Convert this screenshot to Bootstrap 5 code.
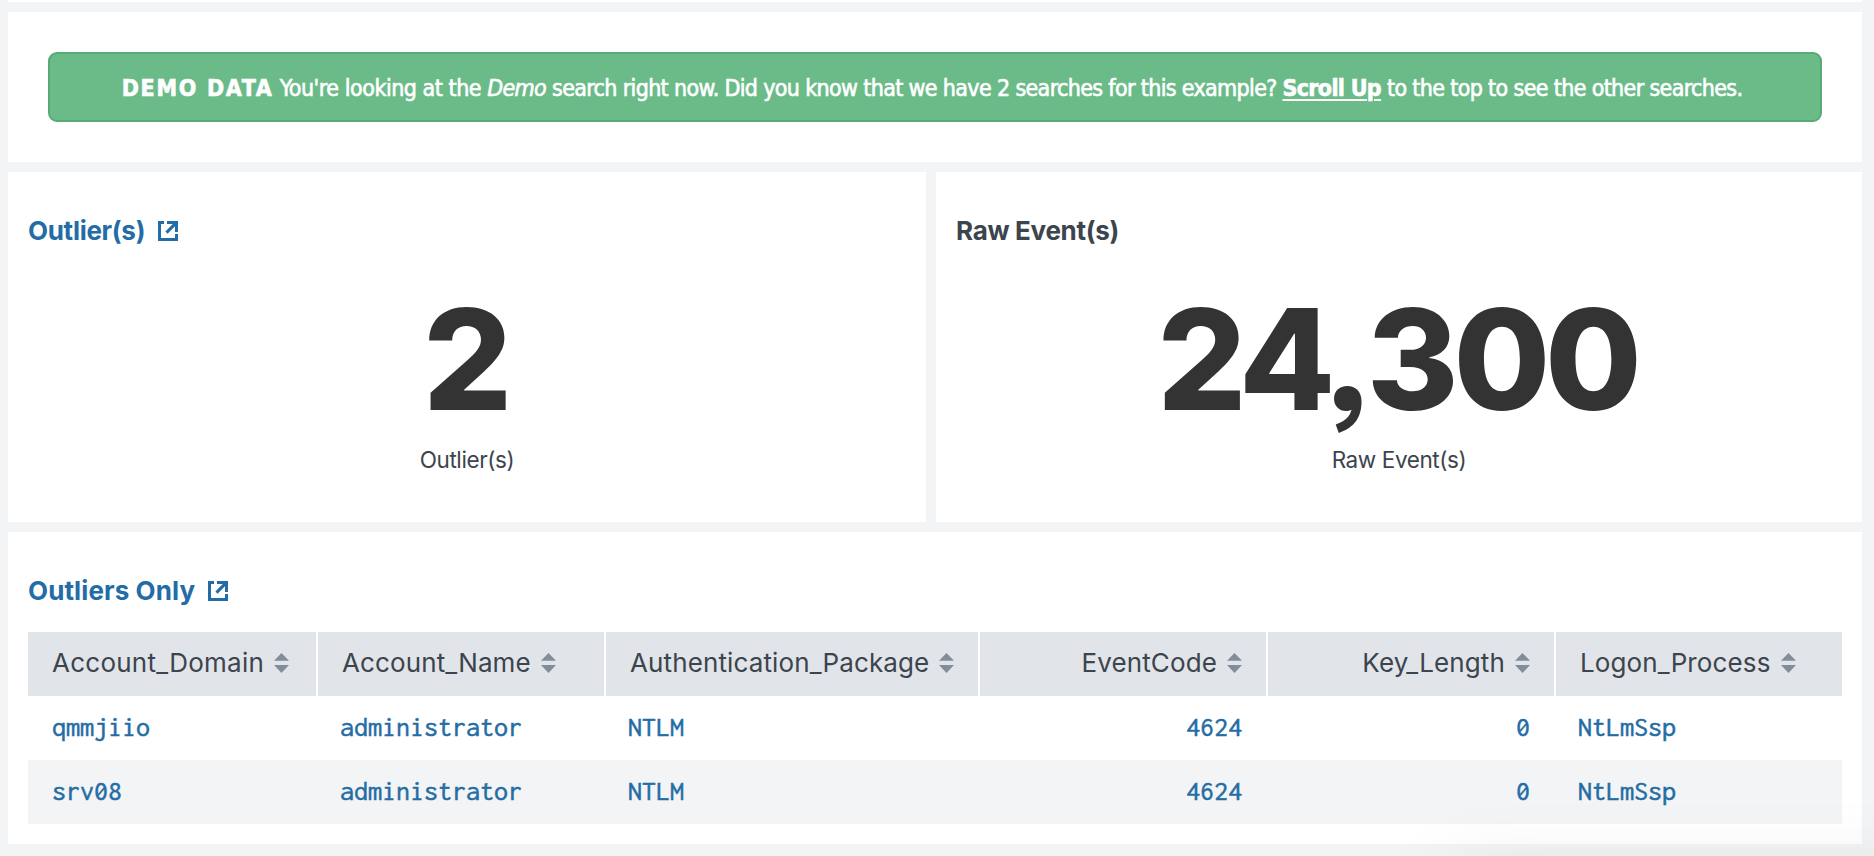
<!DOCTYPE html>
<html lang="en">
<head>
<meta charset="utf-8">
<meta name="viewport" content="width=device-width, initial-scale=1">
<title>Outliers</title>
<link href="https://cdn.jsdelivr.net/npm/bootstrap@5.3.0/dist/css/bootstrap.min.css" rel="stylesheet">
<style>
  body { background: #f2f4f5; font-family: Inter, "Liberation Sans", sans-serif; color: #3c444d; overflow: hidden; }
  .dash { padding: 0 12px 0 8px; gap: 10px; }
  .panel { background: #fff; padding: 46px 20px 0; }
  .panel-prev { height: 2px; }
  .panel-demo { height: 150px; padding: 40px; }
  .demo-alert { height: 70px; padding: 2px 6px 0 0; background: #6bbb89; border: 2px solid #58aa75; border-radius: 9px; color: #fff;
    font-family: "DejaVu Sans Condensed", "DejaVu Sans", sans-serif; font-stretch: condensed; font-size: 23px; line-height: 28px; letter-spacing: -.65px; white-space: pre; -webkit-text-stroke: .6px #fff; }
  .demo-alert strong { letter-spacing: 1.72px; }
  .demo-alert .lead-in { letter-spacing: -.47px; }
  .demo-alert a { color: #fff; font-weight: 700; letter-spacing: -.68px; text-underline-offset: 3px; text-decoration-thickness: 2px; }
  .singles { gap: 10px; height: 350px; }
  .single-a { flex: 0 0 918px; }
  .title { font-size: 26px; line-height: 26px; font-weight: 700; letter-spacing: -.3px; }
  .title a { color: #246ca5; gap: 13px; }
  .title svg { width: 20px; height: 20px; }
  .panel-table .title { letter-spacing: .1px; }
  .big { margin-top: 45px; padding-right: 4px; font-size: 140px; line-height: 140px; font-weight: 800; letter-spacing: -5.2px; color: #333; font-feature-settings: "ss03"; }
  .under { margin-top: 20px; font-size: 22.5px; line-height: 22px; letter-spacing: -.4px; }
  .panel-table { height: 312px; }
  .results { table-layout: fixed; width: 1814px; margin-top: 28px; }
  .results th, .results td { height: 64px; padding: 0 24px 3px; vertical-align: middle; white-space: nowrap; }
  .results th { background: #e1e5e9; font-size: 26px; font-weight: 400; line-height: 30px; letter-spacing: .12px; }
  .results th:first-child { letter-spacing: .25px; }
  .results th + th { border-left: 2px solid #fff; }
  .results th svg { width: 15px; height: 20px; margin-left: 10px; fill: #818d99; vertical-align: -1px; }
  .results td { color: #246ca5; font-family: Inconsolata, "DejaVu Sans Mono", monospace; font-size: 28px; line-height: 30px; -webkit-text-stroke: .5px #246ca5; }
  .results td + td { padding-left: 23px; padding-right: 25px; }
  .results tbody tr:nth-child(2) td { background: #f2f4f5; }
  .c-first { width: 289px; }
  .c-wide { width: 374px; }
  .c-std { width: 288px; }
  .corner-clip { overflow: hidden; pointer-events: none; }
  .corner-shade { position: absolute; left: 1450px; top: 878px; width: 700px; height: 400px; box-shadow: 0 0 80px rgba(0, 0, 0, .1); }
</style>
</head>
<body>
<svg class="d-none">
  <symbol id="open" viewBox="0 0 20 20"><path d="M0 0H6V3H3V17H17V13H20V20H0Z"/><path d="M9 0H20V11H17V5.2L9.6 12.8L7.4 10.6L14.8 3H9Z"/></symbol>
  <symbol id="sort" viewBox="0 0 15 20"><path d="M7.5 0L15 7.8H0ZM0 12H15L7.5 20Z"/></symbol>
</svg>
<main class="dash d-flex flex-column">
  <section class="panel-prev bg-white"></section>
  <section class="panel panel-demo">
    <div class="demo-alert d-flex align-items-center justify-content-center"><div><strong>DEMO DATA</strong><span class="lead-in"> You're looking at the </span><em>Demo</em> search right now. Did you know that we have 2 searches for this example? <a href="#">Scroll Up</a> to the top to see the other searches.</div></div>
  </section>
  <div class="singles d-flex">
    <section class="panel single-a">
      <h2 class="title mb-0"><a href="#" class="d-inline-flex align-items-center text-decoration-none">Outlier(s)<svg fill="currentColor"><use href="#open"/></svg></a></h2>
      <div class="big text-center">2</div>
      <div class="under text-center">Outlier(s)</div>
    </section>
    <section class="panel flex-grow-1">
      <h2 class="title mb-0">Raw Event(s)</h2>
      <div class="big text-center">24,300</div>
      <div class="under text-center">Raw Event(s)</div>
    </section>
  </div>
  <section class="panel panel-table">
    <h2 class="title mb-0"><a href="#" class="d-inline-flex align-items-center text-decoration-none">Outliers Only<svg fill="currentColor"><use href="#open"/></svg></a></h2>
    <table class="results">
      <colgroup><col class="c-first"><col class="c-std"><col class="c-wide"><col class="c-std"><col class="c-std"><col></colgroup>
      <thead>
        <tr>
          <th>Account_Domain<svg><use href="#sort"/></svg></th>
          <th>Account_Name<svg><use href="#sort"/></svg></th>
          <th>Authentication_Package<svg><use href="#sort"/></svg></th>
          <th class="text-end">EventCode<svg><use href="#sort"/></svg></th>
          <th class="text-end">Key_Length<svg><use href="#sort"/></svg></th>
          <th>Logon_Process<svg><use href="#sort"/></svg></th>
        </tr>
      </thead>
      <tbody>
        <tr><td>qmmjiio</td><td>administrator</td><td>NTLM</td><td class="text-end">4624</td><td class="text-end">0</td><td>NtLmSsp</td></tr>
        <tr><td>srv08</td><td>administrator</td><td>NTLM</td><td class="text-end">4624</td><td class="text-end">0</td><td>NtLmSsp</td></tr>
      </tbody>
    </table>
  </section>
</main>
<div class="corner-clip position-fixed top-0 start-0 w-100 h-100"><div class="corner-shade"></div></div>
<script src="https://cdn.jsdelivr.net/npm/bootstrap@5.3.0/dist/js/bootstrap.bundle.min.js"></script>
</body>
</html>
